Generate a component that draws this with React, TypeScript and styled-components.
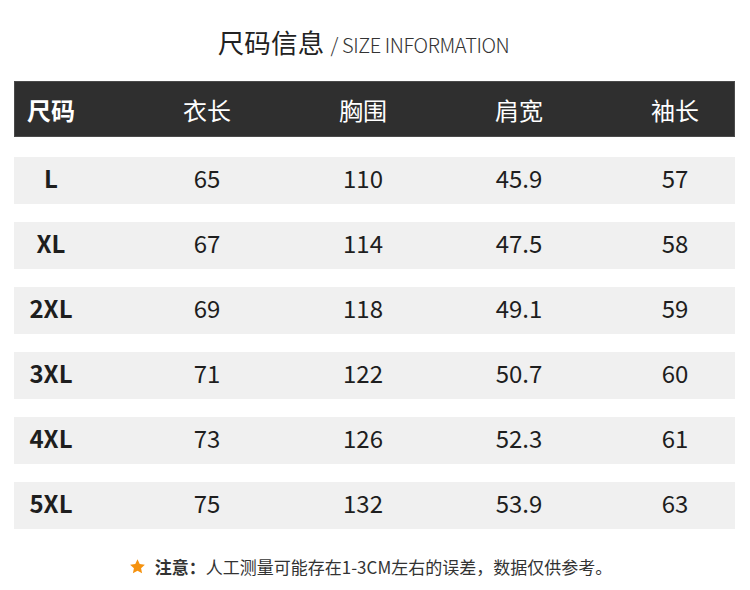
import { styled, createGlobalStyle } from 'styled-components'

const GlobalStyle = createGlobalStyle`
  body {
    margin: 0;
    background: #fff;
    font-family: "Noto Sans CJK SC", "Noto Sans", sans-serif;
    color: #222;
  }
`

const headers = ['尺码', '衣长', '胸围', '肩宽', '袖长']

const rows = [
  ['L', '65', '110', '45.9', '57'],
  ['XL', '67', '114', '47.5', '58'],
  ['2XL', '69', '118', '49.1', '59'],
  ['3XL', '71', '122', '50.7', '60'],
  ['4XL', '73', '126', '52.3', '61'],
  ['5XL', '75', '132', '53.9', '63'],
]

function App() {
  return (
    <Page>
      <GlobalStyle />
      <Title>
        <TitleMain>尺码信息</TitleMain>
        <TitleSub>/ SIZE INFORMATION</TitleSub>
      </Title>

      <Table>
        <HeaderRow>
          {headers.map((h, i) => (
            <HeadCell key={h} $first={i === 0}>
              {h}
            </HeadCell>
          ))}
        </HeaderRow>

        {rows.map((r) => (
          <Row key={r[0]}>
            {r.map((v, i) => (
              <Cell key={i} $first={i === 0}>
                {v}
              </Cell>
            ))}
          </Row>
        ))}
      </Table>

      <Note>
        <Star viewBox="0 0 20 20">
          <path d="M10 1.5l2.6 5.6 6.1.7-4.5 4.2 1.2 6-5.4-3-5.4 3 1.2-6L1.3 7.8l6.1-.7z" fill="#f5920f" />
        </Star>
        <NoteLabel>注意：</NoteLabel>
        人工测量可能存在1-3CM左右的误差，数据仅供参考。
      </Note>
    </Page>
  )
}

const Page = styled.div`
  width: 750px;
  height: 590px;
  box-sizing: border-box;
  padding: 22px 15px 0 14px;
  display: flex;
  flex-direction: column;
`

const Title = styled.div`
  display: flex;
  align-items: baseline;
  justify-content: center;
  gap: 6px;
  padding-right: 22px;
  height: 40px;
  color: #222;
`

const TitleMain = styled.span`
  font-size: 26.5px;
  letter-spacing: 0.2px;
`

const TitleSub = styled.span`
  font-size: 20px;
  color: #333;
  letter-spacing: -0.4px;
  font-weight: 300;
`

const Table = styled.div`
  margin-top: 19px;
  display: flex;
  flex-direction: column;
  gap: 18px;
`

const grid = `
  display: grid;
  grid-template-columns: 115px repeat(4, 156px);
  align-items: center;
`

const HeaderRow = styled.div`
  ${grid}
  height: 56px;
  margin-bottom: 2px;
  background: #2f2f2f;
  box-shadow: inset 0 0 0 1px #4a4a4a;
  color: #fff;
  font-size: 24px;
`

const HeadCell = styled.div<{ $first: boolean }>`
  text-align: ${({ $first }) => ($first ? 'left' : 'center')};
  padding-left: ${({ $first }) => ($first ? '13px' : '0')};
  font-weight: ${({ $first }) => ($first ? 700 : 400)};
`

const Row = styled.div`
  ${grid}
  height: 47px;
  box-sizing: border-box;
  padding-bottom: 7px;
  background: #f0f0f0;
  font-size: 24px;
  color: #1e1e1e;
`

const Cell = styled.div<{ $first: boolean }>`
  width: ${({ $first }) => ($first ? '74px' : 'auto')};
  text-align: center;
  font-weight: ${({ $first }) => ($first ? 700 : 400)};
`

const Note = styled.div`
  margin-top: 25px;
  display: flex;
  align-items: center;
  justify-content: center;
  padding-right: 8px;
  font-size: 17px;
  color: #333;
`

const Star = styled.svg`
  width: 17px;
  height: 17px;
  margin-right: 9px;
`

const NoteLabel = styled.span`
  font-weight: 700;
`

export default App
